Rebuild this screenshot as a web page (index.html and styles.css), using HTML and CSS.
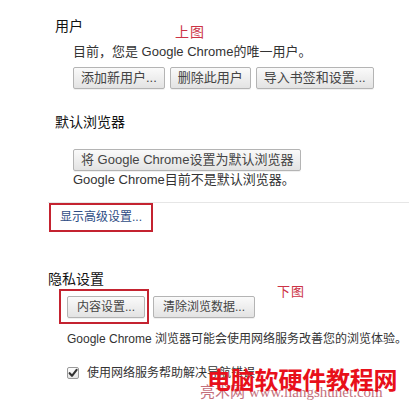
FILE: index.html
```html
<!DOCTYPE html>
<html lang="zh-CN">
<head>
<meta charset="utf-8">
<title>设置</title>
<link rel="stylesheet" href="styles.css">
</head>
<body>
<div class="page">
  <section class="sec-top">
    <div class="title">用户</div>
    <div class="body">
      <p class="desc d1">目前，您是 Google Chrome的唯一用户。</p>
      <div class="btn-row r1">
        <button class="btn">添加新用户...</button>
        <button class="btn">删除此用户</button>
        <button class="btn">导入书签和设置...</button>
      </div>
    </div>
    <div class="title t2">默认浏览器</div>
    <div class="body">
      <div class="btn-row r2">
        <button class="btn">将 Google Chrome设置为默认浏览器</button>
      </div>
      <p class="desc d2">Google Chrome目前不是默认浏览器。</p>
    </div>
  </section>

  <section class="sec-bottom">
    <div class="sep"></div>
    <div class="adv-box"><a class="adv-link">显示高级设置...</a></div>
    <div class="title t3">隐私设置</div>
    <div class="body b3">
      <div class="btn-row r3">
        <span class="hl-box"><button class="btn sm">内容设置...</button></span>
        <button class="btn sm">清除浏览数据...</button>
      </div>
      <p class="desc sm d3">Google Chrome 浏览器可能会使用网络服务改善您的浏览体验。</p>
      <label class="check-row">
        <span class="check-box"><svg viewBox="0 0 12 12" width="12" height="12"><path d="M2.6 6.2 L5 8.8 L9.6 2.8" fill="none" stroke="#333" stroke-width="2.1" stroke-linecap="round" stroke-linejoin="round"/></svg></span>
        <span class="check-text">使用网络服务帮助解决导航错误</span>
      </label>
    </div>
  </section>

  <span class="note note-top">上图</span>
  <span class="note note-bottom">下图</span>
  <span class="wm-sub">亮术网 www.liangshunet.com</span>
  <span class="wm-main">电脑软硬件教程网</span>
</div>
</body>
</html>
```

FILE: styles.css
```css
* { box-sizing: border-box; }

html, body {
  margin: 0;
  padding: 0;
  background: #fff;
}

.page {
  position: relative;
  width: 409px;
  height: 406px;
  overflow: hidden;
  background: #fff;
  font-family: "Liberation Sans", "Noto Sans CJK SC", sans-serif;
  color: #333;
}

.sec-top {
  padding: 17px 0 0 55px;
}

.title {
  font-size: 14px;
  line-height: 18px;
  color: #111;
}

.t2 { margin-top: 24px; }

.body {
  padding-left: 18px;
}

.desc {
  margin: 0;
  font-size: 13px;
  line-height: 18px;
  color: #333;
  white-space: nowrap;
}

.d1 { margin-top: 8px; }
.d2 { line-height: 16px; margin-top: 1px; }

.btn-row {
  display: flex;
  align-items: center;
  gap: 5px;
}

.r1 { margin-top: 6px; }
.r2 { margin-top: 18px; }

.btn {
  height: 22px;
  padding: 0 7px;
  margin: 0;
  border: 1px solid #b4b4b4;
  border-radius: 2px;
  background: linear-gradient(#fafafa, #e3e3e3);
  box-shadow: 0 1px 0 rgba(0, 0, 0, 0.06);
  font-family: "Liberation Sans", "Noto Sans CJK SC", sans-serif;
  font-size: 13px;
  line-height: 20px;
  color: #444;
  white-space: nowrap;
}

.btn.sm {
  font-size: 12px;
  padding: 0 9px;
}

.sec-bottom {
  margin-top: 14px;
  padding-left: 48px;
}

.sep {
  height: 1px;
  background: #e6e6e6;
}

.adv-box {
  display: inline-block;
  margin-left: 1px;
  border: 2px solid #c42330;
  padding: 0 9px;
  height: 29px;
}

.adv-link {
  display: block;
  font-size: 12px;
  line-height: 25px;
  color: #2e4c84;
  text-decoration: none;
}

.t3 {
  margin-top: 38px;
}

.b3 {
  padding-left: 19px;
}

.r3 {
  margin-top: 1px;
  gap: 4px;
}

.hl-box {
  display: inline-flex;
  margin-left: -8px;
  border: 2px solid #c42330;
  padding: 5px 2px 4px 6px;
}

.desc.sm {
  font-size: 12px;
  line-height: 16px;
}

.d3 { margin-top: 7px; }

.check-row {
  display: flex;
  align-items: center;
  gap: 8px;
  margin-top: 18px;
  font-size: 12px;
  line-height: 16px;
  color: #333;
  white-space: nowrap;
}

.check-box {
  display: inline-flex;
  width: 12px;
  height: 12px;
  border: 1px solid #9a9a9a;
  border-radius: 2px;
  background: linear-gradient(#fdfdfd, #e6e6e6);
  align-items: center;
  justify-content: center;
}

.check-box svg {
  display: block;
  flex: none;
}

.note {
  position: absolute;
  font-family: "Noto Sans CJK SC", sans-serif;
  font-size: 14px;
  line-height: 18px;
  color: #cc3346;
  letter-spacing: 1px;
}

.note-top { left: 175px; top: 22px; }
.note-bottom { left: 277px; top: 282px; font-size: 13px; }

.wm-sub {
  position: absolute;
  left: 200px;
  top: 383px;
  font-family: "Liberation Serif", "Noto Sans CJK SC", serif;
  font-size: 15px;
  line-height: 18px;
  color: #c4707c;
  white-space: nowrap;
}

.wm-main {
  position: absolute;
  left: 207px;
  top: 364px;
  font-family: "Noto Sans CJK SC", sans-serif;
  font-size: 24px;
  line-height: 30px;
  font-weight: 700;
  color: #e8101a;
  white-space: nowrap;
  letter-spacing: -0.2px;
}
```
